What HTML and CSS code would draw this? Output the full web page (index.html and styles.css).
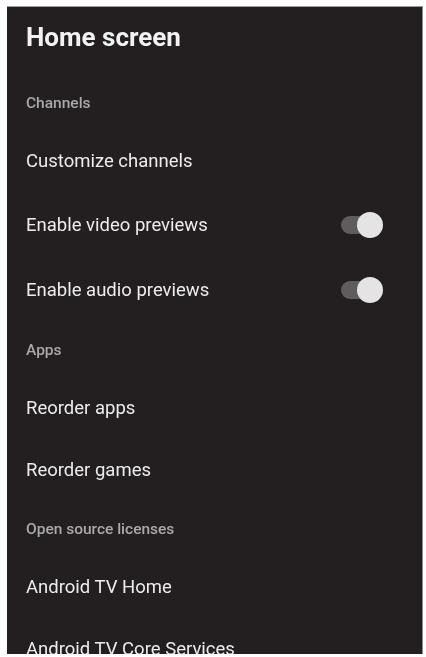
FILE: index.html
```html
<!DOCTYPE html>
<html>
<head>
<meta charset="utf-8">
<link rel="stylesheet" href="styles.css">
</head>
<body>
<div class="panel">
  <div class="title">Home screen</div>
  <div class="header">Channels</div>
  <div class="item">Customize channels</div>
  <div class="item toggle-row">
    <span>Enable video previews</span>
    <span class="switch"><span class="track"></span><span class="knob"></span></span>
  </div>
  <div class="item toggle-row">
    <span>Enable audio previews</span>
    <span class="switch"><span class="track"></span><span class="knob"></span></span>
  </div>
  <div class="header">Apps</div>
  <div class="item">Reorder apps</div>
  <div class="item">Reorder games</div>
  <div class="header">Open source licenses</div>
  <div class="item">Android TV Home</div>
  <div class="item">Android TV Core Services</div>
</div>
</body>
</html>
```

FILE: styles.css
```css
html, body {
  margin: 0;
  padding: 0;
  background: #ffffff;
}
body {
  padding: 6px 2px 3px 7px;
  font-family: Roboto, "Liberation Sans", sans-serif;
}
.panel {
  width: 416px;
  height: 648px;
  box-sizing: border-box;
  background: #231f20;
  border-top: 1px solid #9a9a9a;
  border-right: 1px solid #8a8a8a;
  overflow: hidden;
  padding-left: 19px;
  display: flex;
  flex-direction: column;
  filter: blur(0.4px);
}
.title {
  flex: 0 0 auto;
  height: 68px;
  padding-bottom: 8px;
  box-sizing: border-box;
  display: flex;
  align-items: center;
  font-size: 26px;
  font-weight: 700;
  color: #f2f2f2;
}
.header {
  flex: 0 0 auto;
  height: 55px;
  display: flex;
  align-items: center;
  font-size: 15.5px;
  font-weight: 500;
  color: #a9a9a9;
}
.item {
  flex: 0 0 auto;
  height: 62px;
  display: flex;
  align-items: center;
  font-size: 18.5px;
  color: #ececec;
}
.toggle-row {
  height: 65px;
  justify-content: space-between;
  padding-right: 39px;
}
.switch {
  position: relative;
  width: 42px;
  height: 26px;
}
.track {
  position: absolute;
  left: 0;
  top: 4px;
  width: 36px;
  height: 18px;
  border-radius: 9px;
  background: #5f5c5d;
}
.knob {
  position: absolute;
  right: 0;
  top: 0;
  width: 26px;
  height: 26px;
  border-radius: 50%;
  background: #e4e4e4;
}
```
